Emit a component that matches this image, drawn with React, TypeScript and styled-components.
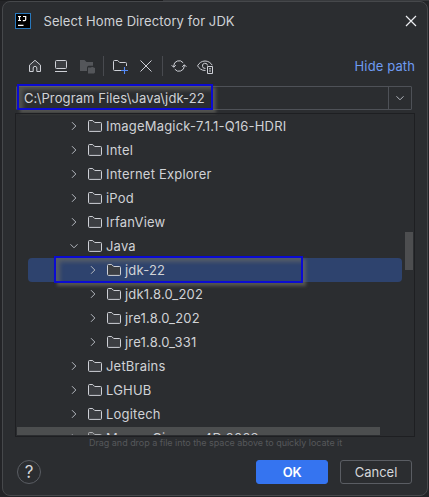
import React from "react";
import styled, { createGlobalStyle, css } from "styled-components";

const GlobalStyle = createGlobalStyle`
  * { box-sizing: border-box; }
  html, body { margin: 0; background: #1d1e20; }
  body { font-family: Inter, "Liberation Sans", sans-serif; font-size: 13px; color: #d0d2d6; overflow: hidden; }
  svg { display: block; flex: none; }
`;

const Desktop = styled.div`
  width: 429px;
  height: 497px;
  padding: 1px 2px 1px 2px;
  background: linear-gradient(90deg, #1d1e20 0 163px, #37393c 163px) top / 100% 1px no-repeat, #232427;
`;

const Dialog = styled.main`
  width: 426px;
  height: 495px;
  border: 1px solid #46484b;
  border-radius: 8px;
  background: #2b2d30;
  display: flex;
  flex-direction: column;
`;

const TitleBar = styled.header`
  height: 38px;
  display: flex;
  align-items: center;
  padding: 0 10px 0 12px;
  gap: 12.5px;
  flex: none;
`;

const Title = styled.h1`
  margin: 0;
  flex: 1;
  font-size: 13px;
  font-weight: 400;
  letter-spacing: 0.09px;
  line-height: 16px;
`;

const Toolbar = styled.div`
  height: 32px;
  margin-top: 10px;
  padding: 0 12px 0 24px;
  display: flex;
  align-items: center;
  gap: 10px;
  flex: none;
`;

const Separator = styled.span`
  flex: none;
  width: 1px;
  height: 20px;
  margin: 0 -2px;
  background: #484a4f;
`;

const HideLink = styled.a`
  margin-left: auto;
  color: #6f9bf2;
  letter-spacing: 0.12px;
`;

const PathField = styled.div`
  position: relative;
  height: 24px;
  width: 396px;
  margin: 4px 0 0 13px;
  border: 1px solid #4e5157;
  display: flex;
  align-items: center;
  flex: none;
  border-radius: 1px;
`;

const PathText = styled.span`
  flex: 1;
  padding-left: 7px;
  position: relative;
  z-index: 1;
  letter-spacing: 0.11px;
`;

const DropButton = styled.span`
  width: 23px;
  height: 22px;
  border-left: 1px solid #4e5157;
  display: grid;
  place-items: center;
`;

const Highlight = styled.span<{ $x: number; $y: number; $w: number; $h: number }>`
  position: absolute;
  left: ${(p) => p.$x}px;
  top: ${(p) => p.$y}px;
  width: ${(p) => p.$w}px;
  height: ${(p) => p.$h}px;
  border: 2px solid #0b0bd2;
  box-shadow: 3px 3px 3px rgba(108, 108, 100, 0.65), inset 4px 4px 4px rgba(108, 108, 100, 0.62);
  pointer-events: none;
`;

const TreePanel = styled.section`
  position: relative;
  width: 400px;
  height: 324px;
  margin: 3px 0 0 12px;
  border: 1px solid #1e1f22;
  flex: none;
`;

const TreeRows = styled.div`
  height: 321px;
  overflow: hidden;
`;

const TreeRow = styled.div<{ $nested?: boolean; $selected?: boolean }>`
  position: relative;
  height: 24px;
  margin: 0 12px;
  padding-left: ${(p) => (p.$nested ? 57 : 38)}px;
  display: flex;
  align-items: center;
  white-space: nowrap;
  border-radius: 4px;
  ${(p) => p.$selected && css`background: #2e436e;`}
`;

const RowArrow = styled.span`
  width: 16px;
  margin-right: 5px;
`;

const RowLabel = styled.span`
  position: relative;
  z-index: 1;
  margin-left: 3px;
  letter-spacing: 0.2px;
`;

const VerticalThumb = styled.span`
  position: absolute;
  right: 1px;
  top: 118px;
  width: 8px;
  height: 38px;
  background: #4d4e50;
`;

const HorizontalThumb = styled.span`
  position: absolute;
  left: 1px;
  bottom: 1px;
  width: 363px;
  height: 8px;
  background: rgba(128, 128, 128, 0.4);
`;

const Hint = styled.p`
  margin: 0;
  height: 13px;
  line-height: 12px;
  font-size: 9px;
  letter-spacing: -0.03px;
  color: #56585b;
  padding-left: 86px;
  white-space: nowrap;
`;

const Footer = styled.footer`
  margin-top: 10px;
  padding: 0 15px 0 14px;
  height: 24px;
  display: flex;
  align-items: center;
  gap: 12px;
`;

const HelpButton = styled.button`
  width: 24px;
  height: 24px;
  margin: 0 auto 0 0;
  padding: 0;
  border: 1px solid #5a5d63;
  border-radius: 50%;
  background: transparent;
  color: #d5d7db;
  font: 400 17px/22px Inter, sans-serif;
`;

const ActionButton = styled.button<{ $primary?: boolean }>`
  width: 72px;
  height: 24px;
  padding: 0;
  border-radius: 3px;
  border: 1px solid ${(p) => (p.$primary ? "#3574f0" : "#5a5d63")};
  background: ${(p) => (p.$primary ? "#3574f0" : "transparent")};
  color: ${(p) => (p.$primary ? "#ffffff" : "#d5d7db")};
  font: ${(p) => (p.$primary ? 600 : 400)} 13px/20px Inter, sans-serif;
  letter-spacing: ${(p) => (p.$primary ? -0.3 : 0)}px;
`;

const stroke = "#ced0d6";

const Logo = () => (
  <svg width="16" height="16" viewBox="0 0 16 16" fill="none">
    <rect x="0.5" y="0.5" width="15" height="15" fill="#000" stroke="#2878bd" />
    <path d="M3 3.5h3M4.5 3.5v4M3 7.5h3M8 3.5h2.7v3q0 1.2-1.3 1.2H7.8M3 12.3h5.5" stroke="#fff" strokeWidth="1.2" />
  </svg>
);

const CloseIcon = () => (
  <svg width="12" height="12" viewBox="0 0 12 12" fill="none">
    <path d="M1 1l10 10M11 1L1 11" stroke="#eceef1" strokeWidth="1.2" />
  </svg>
);

const HomeIcon = () => (
  <svg width="16" height="16" viewBox="0 0 16 16" fill="#3c3e42" stroke={stroke} strokeLinejoin="round">
    <path d="M2.5 7.1L8 2.3l5.5 4.8v6.4h-3.7V10Q9.8 8.4 8 8.4T6.2 10v3.5H2.5z" />
  </svg>
);

const DesktopIcon = () => (
  <svg width="16" height="16" viewBox="0 0 16 16" fill="none" stroke={stroke}>
    <rect x="2.5" y="2.5" width="11" height="8" rx="1" fill="#3c3e42" />
    <path d="M2 13.5h12" />
  </svg>
);

const ModuleIcon = () => (
  <svg width="16" height="16" viewBox="0 0 16 16" fill="#54565a">
    <path d="M1 2h4.5l2 2H14v3.7H9.5Q8 8 8 9.7V13H1z" />
    <path d="M9 9.5h3l1-.8 3 1.3v4.5l-1 1H9z" />
  </svg>
);

const NewFolderIcon = () => (
  <svg width="16" height="16" viewBox="0 0 16 16" fill="none" stroke={stroke}>
    <path d="M9 12.5H2.5a1 1 0 0 1-1-1v-8a1 1 0 0 1 1-1h3.2l2 2h5.8a1 1 0 0 1 1 1V8" />
    <path d="M12.5 9v7M9 12.5h7" stroke="#548af7" strokeWidth="1.1" />
  </svg>
);

const DeleteIcon = () => (
  <svg width="16" height="16" viewBox="0 0 16 16" fill="none" stroke={stroke}>
    <path d="M2.5 2.5l11 11M13.5 2.5l-11 11" />
  </svg>
);

const RefreshIcon = () => (
  <svg width="16" height="16" viewBox="0 0 16 16" fill="none" stroke={stroke}>
    <path d="M2.7 9V8a5.3 5.3 0 0 1 9.5-3.2M13.3 7v1a5.3 5.3 0 0 1-9.5 3.2" />
    <path d="M.6 7.2l2.1 2.1 2.1-2.1M11.2 8.8l2.1-2.1 2.1 2.1" />
  </svg>
);

const EyeIcon = () => (
  <svg width="16" height="16" viewBox="0 0 16 16" fill="none" stroke={stroke}>
    <path d="M8.5 12.5C4.5 12.7 1.7 10 .6 7.8 2 5 4.7 3 8 3c3.2 0 5.8 1.8 7.2 4.2" />
    <path d="M8.5 10.4A2.6 2.6 0 1 1 10.6 7.5" />
    <path d="M10.5 8.5h5v7h-5zM12 10.8h2M12 13h2" />
  </svg>
);

const FolderIcon = () => (
  <svg width="16" height="16" viewBox="0 0 16 16" fill="none" stroke={stroke}>
    <path d="M1.5 3.5a1 1 0 0 1 1-1h3.2l2 2h5.8a1 1 0 0 1 1 1v6.9a1 1 0 0 1-1 1h-11a1 1 0 0 1-1-1z" fill="#3c3e42" />
  </svg>
);

const Chevron = ({ down }: { down?: boolean }) => (
  <svg width="16" height="16" viewBox="0 0 16 16" fill="none" stroke="#b4b8bf">
    <path d={down ? "M4.5 6.3L8 9.8l3.5-3.5" : "M6 4.2L9.8 8 6 11.8"} />
  </svg>
);

type Entry = { name: string; nested?: boolean; open?: boolean; selected?: boolean };

const entries: Entry[] = [
  { name: "ImageMagick-7.1.1-Q16-HDRI" },
  { name: "Intel" },
  { name: "Internet Explorer" },
  { name: "iPod" },
  { name: "IrfanView" },
  { name: "Java", open: true },
  { name: "jdk-22", nested: true, selected: true },
  { name: "jdk1.8.0_202", nested: true },
  { name: "jre1.8.0_202", nested: true },
  { name: "jre1.8.0_331", nested: true },
  { name: "JetBrains" },
  { name: "LGHUB" },
  { name: "Logitech" },
  { name: "Maxon Cinema 4D 2023" },
];

export default function App() {
  return (
    <>
      <GlobalStyle />
      <Desktop>
        <Dialog>
          <TitleBar>
            <Logo />
            <Title>Select Home Directory for JDK</Title>
            <CloseIcon />
          </TitleBar>
          <Toolbar>
            <HomeIcon />
            <DesktopIcon />
            <ModuleIcon />
            <Separator />
            <NewFolderIcon />
            <DeleteIcon />
            <Separator />
            <RefreshIcon />
            <EyeIcon />
            <HideLink>Hide path</HideLink>
          </Toolbar>
          <PathField>
            <PathText>C:\Program Files\Java\jdk-22</PathText>
            <DropButton>
              <Chevron down />
            </DropButton>
            <Highlight $x={0} $y={-3} $w={196} $h={26} />
          </PathField>
          <TreePanel>
            <TreeRows>
              {entries.map((e) => (
                <TreeRow key={e.name} $nested={e.nested} $selected={e.selected}>
                  <RowArrow>
                    <Chevron down={e.open} />
                  </RowArrow>
                  <FolderIcon />
                  <RowLabel>{e.name}</RowLabel>
                  {e.selected && <Highlight $x={26} $y={-2} $w={249} $h={27} />}
                </TreeRow>
              ))}
            </TreeRows>
            <VerticalThumb />
            <HorizontalThumb />
          </TreePanel>
          <Hint>Drag and drop a file into the space above to quickly locate it</Hint>
          <Footer>
            <HelpButton>?</HelpButton>
            <ActionButton $primary>OK</ActionButton>
            <ActionButton>Cancel</ActionButton>
          </Footer>
        </Dialog>
      </Desktop>
    </>
  );
}
